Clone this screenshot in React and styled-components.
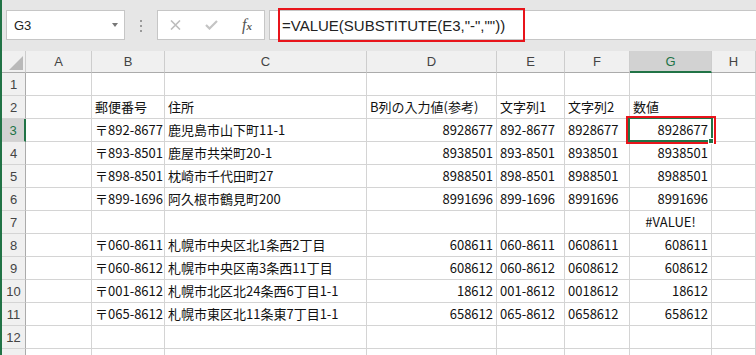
import React from "react";
import styled, { createGlobalStyle } from "styled-components";

const GREEN = "#217346";

const GlobalStyle = createGlobalStyle`
  html, body {
    margin: 0;
    padding: 0;
    background: #fff;
  }
`;

const Window = styled.div`
  width: 756px;
  height: 355px;
  overflow: hidden;
  box-sizing: border-box;
  border-left: 2px solid ${GREEN};
  background: #fff;
`;

const FormulaBar = styled.div`
  display: flex;
  align-items: flex-start;
  height: 51px;
  box-sizing: border-box;
  padding: 10px 0 0 4px;
  background: #e6e6e6;
  font-family: "Liberation Sans", Arial, sans-serif;
`;

const NameBox = styled.div`
  display: flex;
  align-items: center;
  justify-content: space-between;
  width: 119px;
  height: 30px;
  box-sizing: border-box;
  padding: 0 6px 0 7px;
  background: #fff;
  border: 1px solid #c6c6c6;
  font-size: 13px;
  color: #222;
`;

const Caret = styled.span`
  width: 0;
  height: 0;
  border-left: 3px solid transparent;
  border-right: 3px solid transparent;
  border-top: 4px solid #777;
`;

const Grip = styled.div`
  display: flex;
  flex-direction: column;
  align-items: center;
  gap: 3px;
  width: 32px;
  padding-top: 10px;
  box-sizing: border-box;

  span {
    width: 2px;
    height: 2px;
    background: #9a9a9a;
  }
`;

const IconBox = styled.div`
  display: flex;
  align-items: center;
  gap: 24px;
  width: 108px;
  height: 30px;
  box-sizing: border-box;
  padding-left: 12px;
  background: #fff;
  border: 1px solid #c6c6c6;
`;

const Fx = styled.span`
  font-family: "Liberation Serif", "Times New Roman", serif;
  font-style: italic;
  color: #555;
  font-size: 16px;
  line-height: 1;

  small {
    font-size: 11px;
    font-weight: bold;
  }
`;

const FormulaInput = styled.div`
  flex: 1;
  display: flex;
  align-items: center;
  height: 30px;
  margin-left: 4px;
  box-sizing: border-box;
  background: #fff;
  border: 1px solid #c6c6c6;
  border-right: none;
`;

const FormulaText = styled.div`
  display: flex;
  align-items: center;
  flex-shrink: 0;
  width: 247px;
  height: 34px;
  margin-left: 8px;
  box-sizing: border-box;
  padding-left: 2px;
  border: 2px solid #e8141b;
  font-size: 15px;
  color: #222;
  white-space: nowrap;
`;

const Sheet = styled.div`
  display: grid;
  grid-template-columns: 24px 66px 73px 202px 130px 68px 65px 82px 1fr;
  grid-template-rows: 22px;
  grid-auto-rows: 23px;
`;

const Corner = styled.div`
  display: flex;
  align-items: flex-end;
  justify-content: flex-end;
  padding: 0 2px 2px 0;
  background: #f0f0f0;
  border-right: 1px solid #cdcdcd;
  border-bottom: 1px solid #ababab;

  span {
    width: 0;
    height: 0;
    border-left: 14px solid transparent;
    border-bottom: 14px solid #b9b9b9;
  }
`;

const ColHead = styled.div`
  display: flex;
  align-items: center;
  justify-content: center;
  background: ${(p) => (p.$selected ? "#d2d2d2" : "#f0f0f0")};
  border-right: 1px solid #cdcdcd;
  border-bottom: ${(p) => (p.$selected ? `2px solid ${GREEN}` : "1px solid #ababab")};
  font-family: "Liberation Sans", Arial, sans-serif;
  font-size: 13px;
  color: ${(p) => (p.$selected ? GREEN : "#444")};
`;

const RowHead = styled.div`
  display: flex;
  align-items: center;
  justify-content: center;
  background: ${(p) => (p.$selected ? "#d2d2d2" : "#f0f0f0")};
  border-right: ${(p) => (p.$selected ? `2px solid ${GREEN}` : "1px solid #ababab")};
  border-bottom: 1px solid #d4d4d4;
  font-family: "Liberation Sans", Arial, sans-serif;
  font-size: 13px;
  color: ${(p) => (p.$selected ? GREEN : "#444")};
`;

const Cell = styled.div`
  position: relative;
  display: flex;
  align-items: flex-end;
  justify-content: ${(p) =>
    p.$align === "right" ? "flex-end" : p.$align === "center" ? "center" : "flex-start"};
  padding: 0 3px 2px 3px;
  border-right: 1px solid #d4d4d4;
  border-bottom: 1px solid #d4d4d4;
  font-family: "Noto Sans CJK JP", "Noto Sans", sans-serif;
  font-size: 13px;
  line-height: 18px;
  color: #111;
  white-space: nowrap;
  z-index: ${(p) => (p.$active ? 2 : "auto")};

  ${(p) =>
    p.$active &&
    `
    &::before {
      content: "";
      position: absolute;
      top: -2px;
      left: -2px;
      right: -2px;
      bottom: -1px;
      border: 2px solid ${GREEN};
    }
    &::after {
      content: "";
      position: absolute;
      top: -3px;
      left: -4px;
      right: -5px;
      bottom: -3px;
      border: 2px solid #e8141b;
    }
  `}
`;

const FillHandle = styled.span`
  position: absolute;
  right: -3px;
  bottom: -3px;
  width: 4px;
  height: 4px;
  background: ${GREEN};
  border: 1px solid #fff;
  z-index: 3;
`;

const columns = ["A", "B", "C", "D", "E", "F", "G", "H"];

// values for columns B..G
const rows = [
  [],
  ["郵便番号", "住所", "B列の入力値(参考)", "文字列1", "文字列2", "数値"],
  ["〒892-8677", "鹿児島市山下町11-1", "8928677", "892-8677", "8928677", "8928677"],
  ["〒893-8501", "鹿屋市共栄町20-1", "8938501", "893-8501", "8938501", "8938501"],
  ["〒898-8501", "枕崎市千代田町27", "8988501", "898-8501", "8988501", "8988501"],
  ["〒899-1696", "阿久根市鶴見町200", "8991696", "899-1696", "8991696", "8991696"],
  ["", "", "", "", "", "#VALUE!"],
  ["〒060-8611", "札幌市中央区北1条西2丁目", "608611", "060-8611", "0608611", "608611"],
  ["〒060-8612", "札幌市中央区南3条西11丁目", "608612", "060-8612", "0608612", "608612"],
  ["〒001-8612", "札幌市北区北24条西6丁目1-1", "18612", "001-8612", "0018612", "18612"],
  ["〒065-8612", "札幌市東区北11条東7丁目1-1", "658612", "065-8612", "0658612", "658612"],
  [],
  [],
];

function alignFor(col, value, rowIndex) {
  if (rowIndex < 2) return "left";
  if (value === "#VALUE!") return "center";
  if (col === 2 || col === 5) return "right";
  return "left";
}

function App() {
  return (
    <>
      <GlobalStyle />
      <Window>
        <FormulaBar>
          <NameBox>
            <span>G3</span>
            <Caret />
          </NameBox>
          <Grip>
            <span />
            <span />
            <span />
          </Grip>
          <IconBox>
            <svg width="11" height="10" viewBox="0 0 11 10">
              <path d="M1 0.5 L10 9.5 M10 0.5 L1 9.5" stroke="#bdbdbd" strokeWidth="1.6" fill="none" />
            </svg>
            <svg width="13" height="10" viewBox="0 0 13 10">
              <path d="M1 5 L4.5 8.5 L12 1" stroke="#c4c4c4" strokeWidth="2.2" fill="none" />
            </svg>
            <Fx>
              f<small>x</small>
            </Fx>
          </IconBox>
          <FormulaInput>
            <FormulaText>=VALUE(SUBSTITUTE(E3,"-",""))</FormulaText>
          </FormulaInput>
        </FormulaBar>

        <Sheet>
          <Corner>
            <span />
          </Corner>
          {columns.map((c) => (
            <ColHead key={c} $selected={c === "G"}>
              {c}
            </ColHead>
          ))}

          {rows.map((row, r) => (
            <React.Fragment key={r}>
              {/* row 13 only peeks in at the bottom edge, its number is out of view */}
              <RowHead $selected={r === 2}>{r < 12 ? r + 1 : ""}</RowHead>
              <Cell />
              {[0, 1, 2, 3, 4, 5].map((c) => {
                const value = row[c] || "";
                const active = r === 2 && c === 5;
                return (
                  <Cell key={c} $align={alignFor(c, value, r)} $active={active}>
                    {value}
                    {active && <FillHandle />}
                  </Cell>
                );
              })}
              <Cell />
            </React.Fragment>
          ))}
        </Sheet>
      </Window>
    </>
  );
}

export default App;
